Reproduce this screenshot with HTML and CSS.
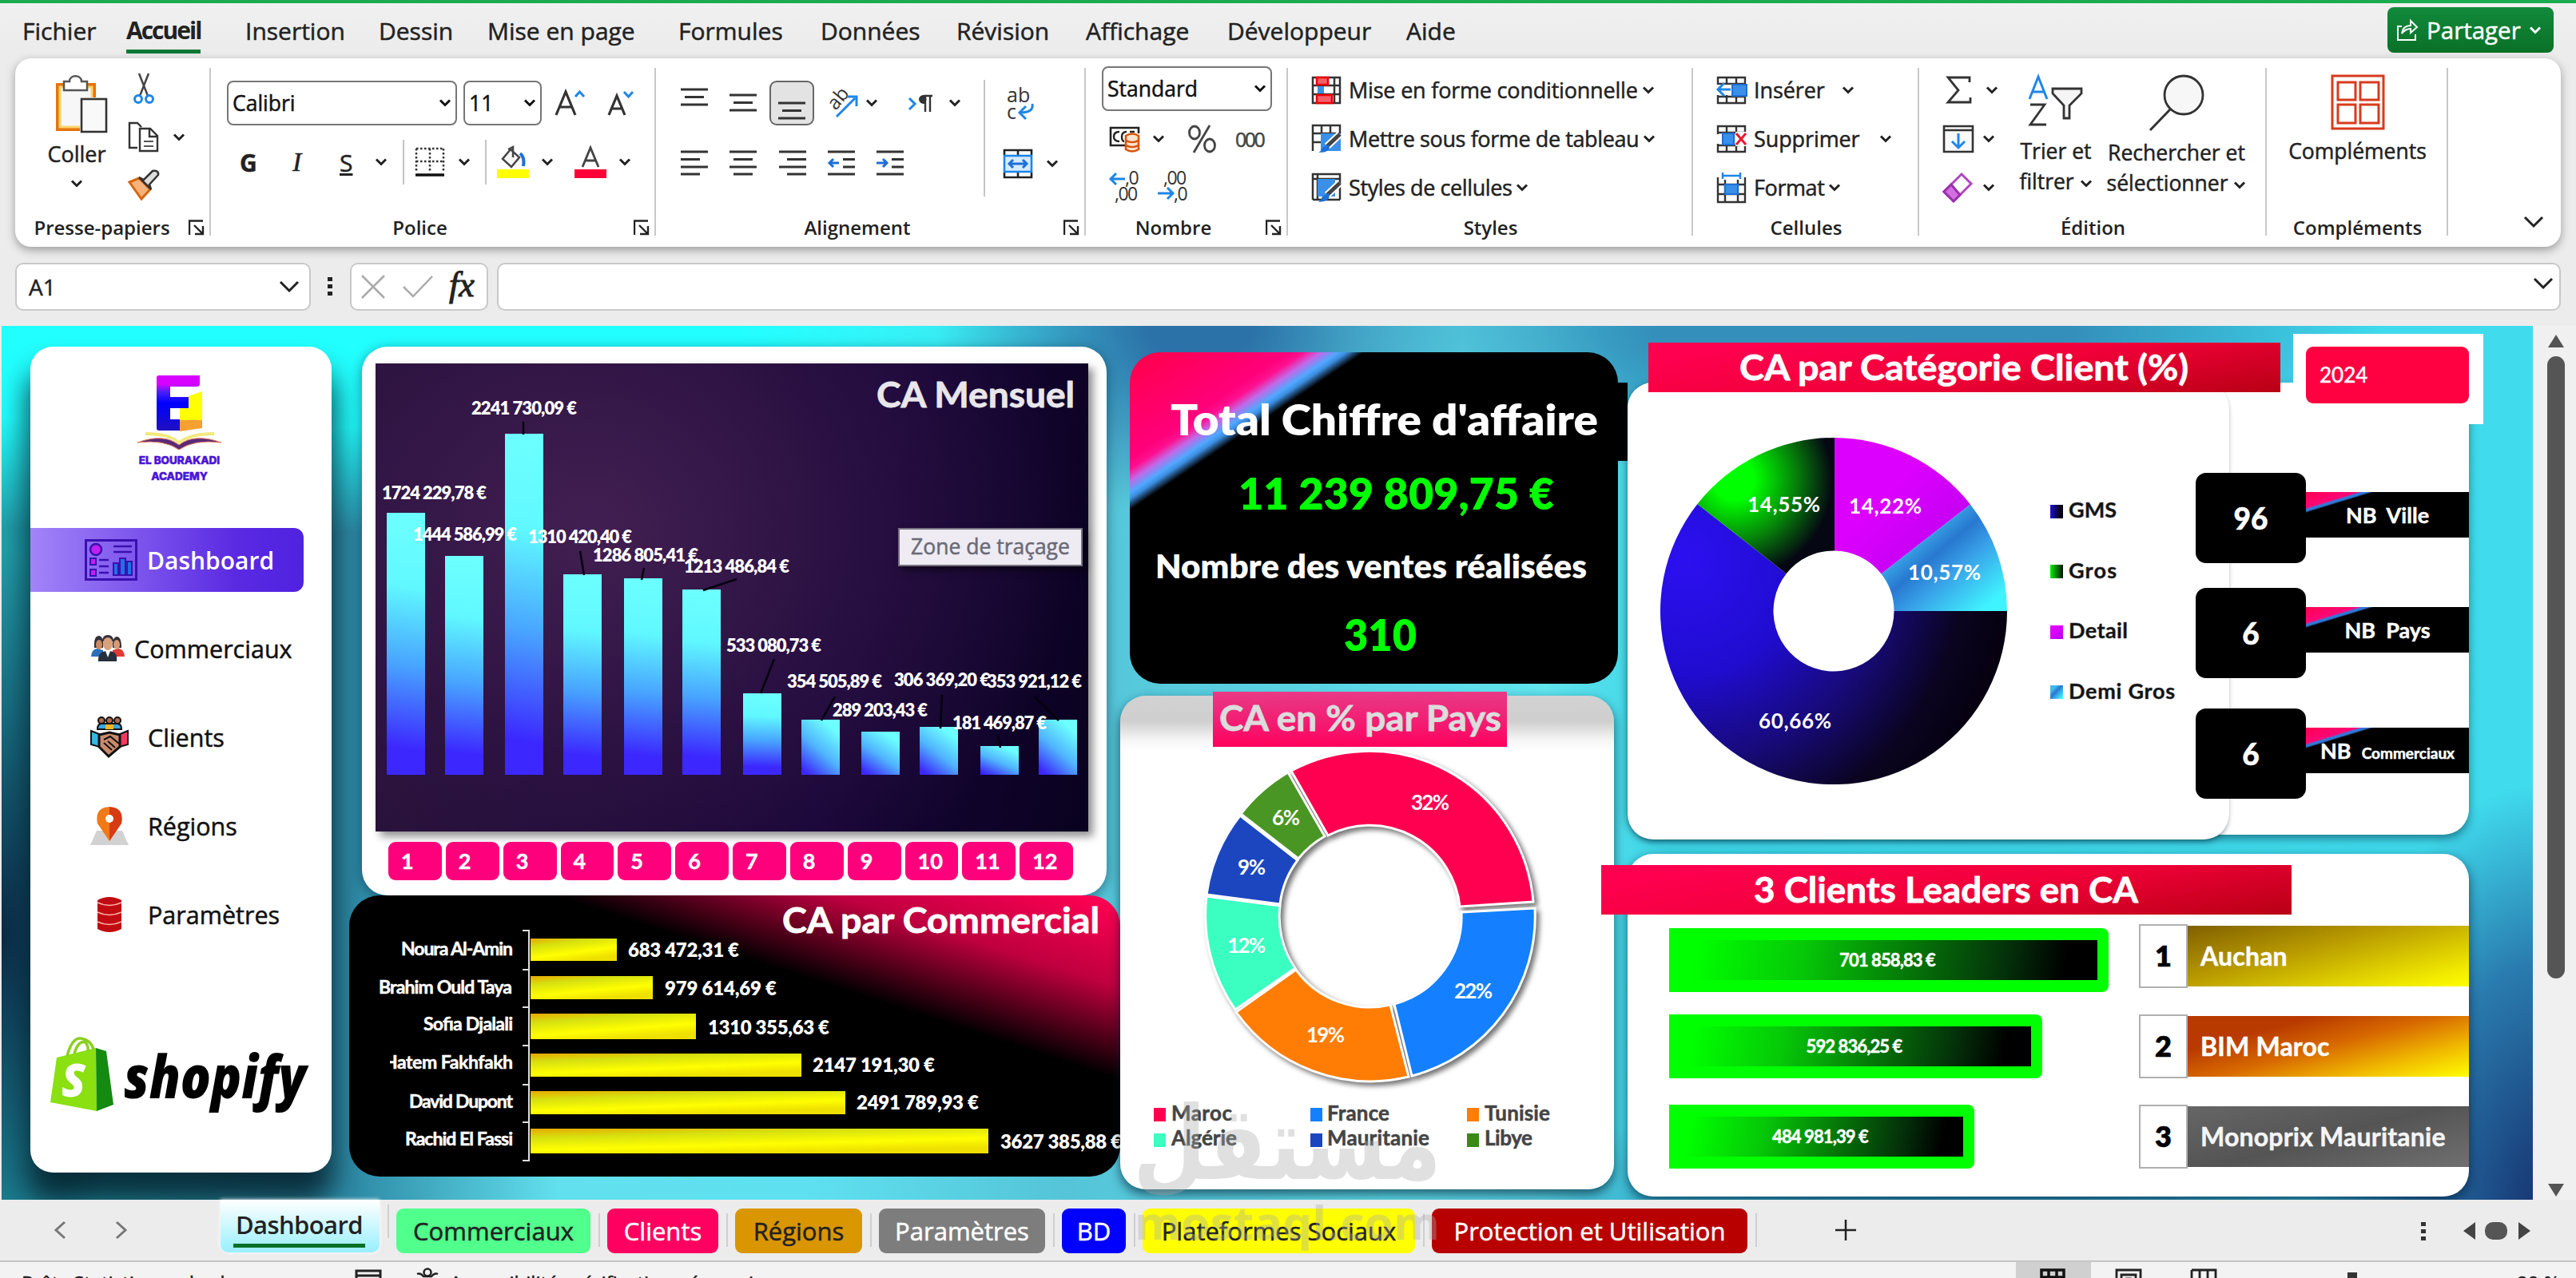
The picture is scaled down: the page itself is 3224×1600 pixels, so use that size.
FILE: index.html
```html
<!DOCTYPE html>
<html lang="fr">
<head>
  <meta charset="UTF-8">
  <title>Dashboard - Excel</title>
  <link rel="stylesheet" href="styles.css">
</head>
<body>

  <!-- Shared icons -->
  <svg class="defs" width="0" height="0">
    <symbol id="chev" viewBox="0 0 16 10"><path d="M2 1.5 L8 7.5 L14 1.5" fill="none" stroke="currentColor" stroke-width="3"/></symbol>
    <symbol id="bigchev" viewBox="0 0 26 16"><path d="M2 2 L13 13 L24 2" fill="none" stroke="currentColor" stroke-width="3"/></symbol>
    <symbol id="launch" viewBox="0 0 20 20"><path d="M1 19 V1.5 H18 M7 7 L17 17 M18 8 V18 H8" fill="none" stroke="#222" stroke-width="2.4"/></symbol>
  </svg>

  <!-- Menu -->
  <div class="menu">
    <span>Fichier</span>
    <span class="active">Accueil</span>
    <span>Insertion</span>
    <span>Dessin</span>
    <span>Mise en page</span>
    <span>Formules</span>
    <span>Données</span>
    <span>Révision</span>
    <span>Affichage</span>
    <span>Développeur</span>
    <span>Aide</span>
    <button class="share">
      <svg width="28" height="30" viewBox="0 0 28 30"><path d="M7 10 H2 V27 H24 V20 M7 19 C8 12 12 9 18 9 V3 L26 11 L18 18 V13 C13 13 10 15 7 19 Z" fill="none" stroke="#fff" stroke-width="2"/></svg>
      Partager
      <svg class="chev"><use href="#chev"/></svg>
    </button>
  </div>

  <!-- Ribbon -->
  <div class="ribbon">

    <div class="group g-clip">
      <div class="tools">
        <div class="paste">
          <svg width="66" height="74" viewBox="0 0 66 74">
            <rect x="3" y="13" width="46" height="56" fill="#f7f7f7" stroke="#e8720c" stroke-width="4"/>
            <rect x="6" y="16" width="40" height="50" fill="none" stroke="#fbd36b" stroke-width="3"/>
            <path d="M11 20 V9 H18 C18 0 33 0 33 9 H40 V20 Z" fill="#fff" stroke="#555" stroke-width="2.5"/>
            <rect x="31" y="29" width="36" height="48" fill="#fff"/>
            <rect x="33" y="31" width="31" height="41" fill="#f9f9f9" stroke="#333" stroke-width="2.6"/>
          </svg>
          <span>Coller</span>
          <svg class="chev"><use href="#chev"/></svg>
        </div>
        <div class="clip-side">
          <svg width="28" height="40" viewBox="0 0 28 40"><path d="M8 1 L19 29 M20 1 L9 29" stroke="#444" stroke-width="2.5"/><circle cx="7" cy="33" r="4.5" fill="none" stroke="#1e86e8" stroke-width="3"/><circle cx="21" cy="33" r="4.5" fill="none" stroke="#1e86e8" stroke-width="3"/></svg>
          <div class="copy">
            <svg width="40" height="40" viewBox="0 0 40 40"><path d="M12 33 H2 V2 H12 L17 7" fill="#fff" stroke="#333" stroke-width="2.4"/><path d="M15 9 H28 L37 18 V37 H15 Z M27 9 V19 H37" fill="#fff" stroke="#333" stroke-width="2.4"/><path d="M20 25 H32 M20 31 H32" stroke="#555" stroke-width="2"/></svg>
            <svg class="chev"><use href="#chev"/></svg>
          </div>
          <svg width="40" height="38" viewBox="0 0 40 38"><path d="M2 15 L14 10 L28 24 L17 36 Z" fill="#f6b27a" stroke="#d9660d" stroke-width="3"/><path d="M14 9 L20 12 L31 1 Q39 0 38 6 L27 18 L29 24 Z" fill="#ddd" stroke="#333" stroke-width="2.5"/></svg>
        </div>
      </div>
      <div class="label"><span>Presse-papiers</span><svg class="launch"><use href="#launch"/></svg></div>
    </div>

    <div class="group g-font">
      <div class="tools rows">
        <div class="font-row1">
          <div class="combo">Calibri<svg class="chev"><use href="#chev"/></svg></div>
          <div class="combo">11<svg class="chev"><use href="#chev"/></svg></div>
          <svg width="38" height="36" viewBox="0 0 38 36"><path d="M2 33 L14 4 L26 33 M6.500 23 H21.500" fill="none" stroke="#333" stroke-width="3.200"/><path d="M26 10 L31.500 4 L37 10" fill="none" stroke="#1e86e8" stroke-width="3"/></svg>
          <svg width="36" height="36" viewBox="0 0 36 36"><path d="M2 33 L12 9 L22 33 M5.500 25 H18.500" fill="none" stroke="#333" stroke-width="3.200"/><path d="M21 4 L26.500 10 L32 4" fill="none" stroke="#1e86e8" stroke-width="3"/></svg>
        </div>
        <div class="font-row2">
          <b>G</b><i>I</i><u>S</u>
          <svg class="chev"><use href="#chev"/></svg>
          <hr>
          <svg width="38" height="38" viewBox="0 0 38 38"><path d="M2 2 H36 M2 2 V32 M36 2 V32 M19 2 V32 M2 18 H36" fill="none" stroke="#333" stroke-width="2.500" stroke-dasharray="2.500 2.500"/><path d="M1 35 H37" stroke="#111" stroke-width="3.500"/></svg>
          <svg class="chev"><use href="#chev"/></svg>
          <hr>
          <svg width="40" height="40" viewBox="0 0 40 40"><path d="M14 4 L20 1 V14 M17 4 L7 16 L18 26 L28 14 Z" fill="#f6f6f6" stroke="#444" stroke-width="2.500"/><path d="M29 9 Q35 14 33 25" fill="none" stroke="#1e6fd8" stroke-width="4"/><rect x="0" y="29" width="40" height="11" fill="#ff0"/></svg>
          <svg class="chev"><use href="#chev"/></svg>
          <svg width="40" height="40" viewBox="0 0 40 40"><path d="M10 26 L20 2 L30 26 M14 18 H26" fill="none" stroke="#444" stroke-width="2.800"/><rect x="0" y="29" width="40" height="11" fill="#ff0038"/></svg>
          <svg class="chev"><use href="#chev"/></svg>
        </div>
      </div>
      <div class="label"><span>Police</span><svg class="launch"><use href="#launch"/></svg></div>
    </div>

    <div class="group g-align">
      <div class="tools">
        <div class="align-left">
          <div class="align-row1">
            <svg width="34" height="40" viewBox="0 0 34 40"><path d="M0 3 H34 M5 12.500 H29 M0 22 H34" stroke="#333" stroke-width="3"/></svg>
            <svg width="34" height="40" viewBox="0 0 34 40"><path d="M0 10 H34 M5 19.500 H29 M0 29 H34" stroke="#333" stroke-width="3"/></svg>
            <div class="pressed"><svg width="34" height="40" viewBox="0 0 34 40"><path d="M0 19 H34 M5 28.500 H29 M0 38 H34" stroke="#333" stroke-width="3"/></svg></div>
            <svg width="42" height="40" viewBox="0 0 42 40"><text x="0" y="0" font-size="24" fill="#333" transform="translate(12 30) rotate(-50)">ab</text><path d="M13 37 L36 14 M26 12 H38 V24" fill="none" stroke="#1e86e8" stroke-width="3"/></svg>
            <svg class="chev"><use href="#chev"/></svg>
            <svg width="32" height="30" viewBox="0 0 32 30"><path d="M1 9 L8 16 L1 23" fill="none" stroke="#1e86e8" stroke-width="3"/><path d="M22 15 C12 15 12 6 20 6 H30 M21 6 V26 M27 6 V26" fill="none" stroke="#333" stroke-width="2.400"/><circle cx="18" cy="10.500" r="4.500" fill="#333"/></svg>
            <svg class="chev"><use href="#chev"/></svg>
          </div>
          <div class="align-row2">
            <svg width="34" height="34" viewBox="0 0 34 34"><path d="M0 3 H34 M0 12.500 H24 M0 22 H34 M0 31 H24" stroke="#333" stroke-width="3"/></svg>
            <svg width="34" height="34" viewBox="0 0 34 34"><path d="M0 3 H34 M5 12.500 H29 M0 22 H34 M5 31 H29" stroke="#333" stroke-width="3"/></svg>
            <svg width="34" height="34" viewBox="0 0 34 34"><path d="M0 3 H34 M10 12.500 H34 M0 22 H34 M10 31 H34" stroke="#333" stroke-width="3"/></svg>
            <svg width="34" height="34" viewBox="0 0 34 34"><path d="M0 3 H34 M19 12.500 H34 M19 22 H34 M0 31 H34" stroke="#333" stroke-width="3"/><path d="M14 17 H2 M7 12 L2 17 L7 22" fill="none" stroke="#1e6fd8" stroke-width="3"/></svg>
            <svg width="34" height="34" viewBox="0 0 34 34"><path d="M0 3 H34 M19 12.500 H34 M19 22 H34 M0 31 H34" stroke="#333" stroke-width="3"/><path d="M0 17 H12 M8 12 L13 17 L8 22" fill="none" stroke="#1e6fd8" stroke-width="3"/></svg>
          </div>
        </div>
        <hr>
        <div class="wrap-merge">
          <svg width="36" height="44" viewBox="0 0 36 44"><text x="0" y="20" font-size="25" fill="#333">ab</text><text x="0" y="41" font-size="25" fill="#333">c</text><path d="M32 22 Q34 33 17 33 M24 25 L16 33 L24 41" fill="none" stroke="#1e86e8" stroke-width="3"/></svg>
          <div class="merge">
            <svg width="38" height="38" viewBox="0 0 38 38"><path d="M2 8 V2 H36 V8 M19 2 V8 M2 30 V36 H36 V30 M19 30 V36" fill="none" stroke="#222" stroke-width="2.600"/><rect x="2" y="9" width="34" height="20" fill="#d6ebff" stroke="#1e86e8" stroke-width="2.600"/><path d="M8 19 H30 M13 14 L8 19 L13 24 M25 14 L30 19 L25 24" fill="none" stroke="#1e6fd8" stroke-width="3"/></svg>
            <svg class="chev"><use href="#chev"/></svg>
          </div>
        </div>
      </div>
      <div class="label"><span>Alignement</span><svg class="launch"><use href="#launch"/></svg></div>
    </div>

    <div class="group g-num">
      <div class="tools rows">
        <div class="combo">Standard<svg class="chev"><use href="#chev"/></svg></div>
        <div class="num-row2">
          <svg width="40" height="34" viewBox="0 0 40 34"><path d="M20 25 H2 V3 H37 V10" fill="none" stroke="#222" stroke-width="2.600"/><path d="M13 8 Q6 8 6 14 T13 20 M22 8 Q16 8 16 14 T19 20 M26 8 H32" fill="none" stroke="#222" stroke-width="2.400"/><path d="M21 13 Q29 8 37 13 V30 Q29 35 21 30 Z M21 19 Q29 23 37 19 M21 25 Q29 29 37 25" fill="#fde4cf" stroke="#d9540d" stroke-width="2.600"/></svg>
          <svg class="chev"><use href="#chev"/></svg>
          <svg width="38" height="38" viewBox="0 0 38 38"><ellipse cx="9" cy="11" rx="6.500" ry="8" fill="none" stroke="#444" stroke-width="2.800"/><ellipse cx="28" cy="27" rx="6.500" ry="8" fill="none" stroke="#444" stroke-width="2.800"/><path d="M28 2 L8 36" stroke="#444" stroke-width="2.800"/></svg>
          <span class="zeros">000</span>
        </div>
        <div class="num-row3">
          <svg width="38" height="40" viewBox="0 0 38 40"><text x="20" y="17" class="dec">,0</text><text x="7" y="37" class="dec">,00</text><path d="M20 10 H2 M9 3 L2 10 L9 17" fill="none" stroke="#1e86e8" stroke-width="3"/></svg>
          <svg width="38" height="40" viewBox="0 0 38 40"><text x="7" y="17" class="dec">,00</text><text x="20" y="37" class="dec">,0</text><path d="M0 28 H18 M12 21 L19 28 L12 35" fill="none" stroke="#1e86e8" stroke-width="3"/></svg>
        </div>
      </div>
      <div class="label"><span>Nombre</span><svg class="launch"><use href="#launch"/></svg></div>
    </div>

    <div class="group g-styles">
      <div class="tools list">
        <div class="item">
          <svg width="38" height="36" viewBox="0 0 38 36"><path d="M2 2 H36 V34 H2 Z M2 12 H36 M2 23 H36 M29 2 V34" fill="#fff" stroke="#333" stroke-width="2.500"/><rect x="7" y="2" width="14" height="9" fill="#f4606a" stroke="#e00" stroke-width="2.500"/><rect x="8" y="13" width="8" height="9" fill="#3a90e8"/><rect x="7" y="24" width="19" height="10" fill="#f4606a" stroke="#e00" stroke-width="2.500"/></svg>
          Mise en forme conditionnelle<svg class="chev"><use href="#chev"/></svg>
        </div>
        <div class="item">
          <svg width="38" height="38" viewBox="0 0 38 38"><path d="M2 34 V2 H36 V12 M2 12 H36 M2 23 H12 M13 2 V12 M24 2 V12" fill="none" stroke="#333" stroke-width="2.500"/><rect x="12" y="12" width="25" height="22" fill="#3a90e8"/><path d="M36 13 L20 28" stroke="#fff" stroke-width="9"/><path d="M36 13 L20 28" stroke="#444" stroke-width="5"/><path d="M22 26 Q26 36 9 36 Q13 34 14 30 Z" fill="#1e6fd8"/></svg>
          <span class="w-tab">Mettre sous forme de tableau</span><svg class="chev"><use href="#chev"/></svg>
        </div>
        <div class="item">
          <svg width="38" height="38" viewBox="0 0 38 38"><path d="M2 34 V2 H36 V34 M2 8 H36 M8 2 V34 M2 34 H36" fill="none" stroke="#333" stroke-width="2.500"/><rect x="8" y="8" width="22" height="22" fill="#3a90e8"/><path d="M36 13 L20 28" stroke="#fff" stroke-width="9"/><path d="M36 13 L20 28" stroke="#444" stroke-width="5"/><path d="M22 26 Q26 36 9 37 Q13 34 14 30 Z" fill="#1e6fd8"/></svg>
          <span class="w-tab">Styles de cellules</span><svg class="chev"><use href="#chev"/></svg>
        </div>
      </div>
      <div class="label"><span>Styles</span></div>
    </div>

    <div class="group g-cells">
      <div class="tools list">
        <div class="item">
          <svg width="38" height="36" viewBox="0 0 38 36"><path d="M2 2 H36 V34 H2 Z M2 10 H36 M2 26 H36 M13 2 V34 M25 2 V34" fill="#fff" stroke="#333" stroke-width="2.400"/><rect x="0" y="11" width="22" height="13" fill="#fff"/><rect x="20" y="11" width="18" height="14" fill="#3a90e8" stroke="#1e6fd8" stroke-width="2"/><path d="M18 17 H2 M10 9 L2 17 L10 25" fill="none" stroke="#1e86e8" stroke-width="3"/></svg>
          <span class="w-ins">Insérer</span><svg class="chev"><use href="#chev"/></svg>
        </div>
        <div class="item">
          <svg width="38" height="36" viewBox="0 0 38 36"><path d="M2 12 V2 H36 V12 M2 24 V34 H36 V24 M2 10 H36 M2 26 H30 M13 2 V34 M25 2 V34" fill="none" stroke="#333" stroke-width="2.400"/><rect x="8" y="11" width="14" height="14" fill="#3a90e8" stroke="#1e6fd8" stroke-width="2"/><rect x="24" y="9" width="14" height="18" fill="#fff"/><path d="M25 11 L37 25 M37 11 L25 25" stroke="#e81c2e" stroke-width="3"/></svg>
          <span class="w-sup">Supprimer</span><svg class="chev"><use href="#chev"/></svg>
        </div>
        <div class="item">
          <svg width="38" height="40" viewBox="0 0 38 40"><path d="M2 7 V38 H36 V7 M2 16 H36 M2 28 H36 M11 10 V38 M27 10 V38" fill="none" stroke="#333" stroke-width="2.400"/><rect x="11" y="16" width="16" height="12" fill="#3a90e8" stroke="#1e6fd8" stroke-width="2"/><path d="M9 5 H29 M8 1 V9 M30 1 V9" stroke="#1e86e8" stroke-width="2.500"/></svg>
          <span class="w-tab">Format</span><svg class="chev"><use href="#chev"/></svg>
        </div>
      </div>
      <div class="label"><span>Cellules</span></div>
    </div>

    <div class="group g-edit">
      <div class="tools">
        <div class="list edit-small">
          <div class="item"><svg width="40" height="36" viewBox="0 0 40 36"><path d="M34 8 V2 H7 L20 18 L7 33 H35 V27" fill="none" stroke="#333" stroke-width="2.800"/></svg><svg class="chev wide"><use href="#chev"/></svg></div>
          <div class="item"><svg width="40" height="36" viewBox="0 0 40 36"><path d="M2 2 H38 V34 H2 Z M2 7 H38" fill="#f9f9f9" stroke="#333" stroke-width="2.600"/><path d="M20 11 V29 M12 21 L20 29 L28 21" fill="none" stroke="#1e86e8" stroke-width="3"/></svg><svg class="chev"><use href="#chev"/></svg></div>
          <div class="item"><svg width="40" height="40" viewBox="0 0 40 40"><path d="M24 3 L36 15 L14 37 L2 25 Z" fill="#fff" stroke="#b146c2" stroke-width="3"/><path d="M11 16 L22 29 L14 37 L2 25 Z" fill="#d36fe0" stroke="#9b30ad" stroke-width="3"/></svg><svg class="chev"><use href="#chev"/></svg></div>
        </div>
        <div class="big">
          <svg width="72" height="70" viewBox="0 0 72 70"><path d="M3 31 L14 3 L25 31 M7 22 H21" fill="none" stroke="#1e86e8" stroke-width="3"/><path d="M4 38 H22 L4 63 H24" fill="none" stroke="#333" stroke-width="2.800"/><path d="M32 18 H68 V24 L53 39 V55 H46 V39 L32 24 Z" fill="#f5f5f5" stroke="#333" stroke-width="2.800"/></svg>
          <span>Trier et<br>filtrer <svg class="chev"><use href="#chev"/></svg></span>
        </div>
        <div class="big big2">
          <svg width="72" height="72" viewBox="0 0 72 72"><circle cx="45" cy="26" r="24" fill="#f7f7f7" stroke="#333" stroke-width="2.800"/><path d="M28 44 L3 70" stroke="#333" stroke-width="3"/></svg>
          <span>Rechercher et<br>sélectionner <svg class="chev"><use href="#chev"/></svg></span>
        </div>
      </div>
      <div class="label"><span>Édition</span></div>
    </div>

    <div class="group g-addins">
      <div class="tools">
        <div class="big">
          <svg width="68" height="70" viewBox="0 0 68 70"><path d="M2 2 H66 V68 H2 Z M9 10 H31 V32 H9 Z M37 10 H60 V32 H37 Z M9 38 H31 V61 H9 Z M37 38 H60 V61 H37 Z" fill="none" stroke="#d83b1c" stroke-width="3"/></svg>
          <span>Compléments</span>
        </div>
      </div>
      <div class="label"><span>Compléments</span></div>
    </div>

    <svg class="bigchev collapse"><use href="#bigchev"/></svg>
  </div>

  <!-- Formula bar -->
  <div class="formula">
    <div class="box namebox">A1<svg class="bigchev"><use href="#bigchev"/></svg></div>
    <svg width="6" height="24" viewBox="0 0 6 24"><path d="M0 0 H6 V5 H0 Z M0 9 H6 V14 H0 Z M0 18 H6 V23 H0 Z" fill="#222"/></svg>
    <div class="box fx">
      <svg width="30" height="30" viewBox="0 0 30 30"><path d="M1 1 L29 29 M29 1 L1 29" stroke="#aaa" stroke-width="2.500"/></svg>
      <svg width="38" height="28" viewBox="0 0 38 28"><path d="M1 14 L13 26 L37 1" fill="none" stroke="#aaa" stroke-width="2.500"/></svg>
      <em>fx</em>
    </div>
    <div class="box input"><svg class="bigchev"><use href="#bigchev"/></svg></div>
  </div>

  <!-- Worksheet -->
  <div class="work">
    <div class="sheet">

      <div class="sidebar">
        <div class="logo">
          <svg width="110" height="96" viewBox="170 468 110 96">
            <defs><linearGradient id="lg" x1="0" y1="0" x2="0" y2="1"><stop offset="0" stop-color="#d800ff"/><stop offset=".16" stop-color="#d800ff"/><stop offset=".3" stop-color="#4a20ff"/><stop offset=".5" stop-color="#0000ff"/><stop offset="1" stop-color="#2010c0"/></linearGradient></defs>
            <path d="M199 470 H250 V481 Q250 484 246 484 H213 V497 H236 V511 H213 V525 H226 V539 H199 Q196 539 196 536 V473 Q196 470 199 470 Z" fill="url(#lg)"/>
            <path d="M253 490 V526 H225 V511 H236 V496 Z" fill="#ffff00"/>
            <path d="M253 526 V536 L225 540 V526 Z" fill="#f5a030"/>
            <path d="M182 541 Q212 541 224 552 Q238 541 268 541 V545 Q238 545 224 556 Q212 545 182 545 Z" fill="#f3e87a"/>
            <path d="M172 554 Q205 542 224 557 Q243 542 277 554 Q242 550 224 563 Q206 550 172 554 Z" fill="#5a2a78" stroke="#e0785a" stroke-width="1"/>
          </svg>
          <strong>EL BOURAKADI<br>ACADEMY</strong>
        </div>
        <div class="nav active">
          <svg width="66" height="52" viewBox="0 0 66 52"><rect x="1.500" y="1.500" width="63" height="49" fill="none" stroke="#3a10b0" stroke-width="3"/><circle cx="14" cy="13" r="7" fill="#c020f0" stroke="#3a10b0" stroke-width="2.500"/><path d="M36 9 H59 M36 16 H59 M18 26 H30 M18 34 H30 M18 42 H30" stroke="#3a10b0" stroke-width="2.500"/><rect x="7" y="24" width="7" height="8" fill="#c020f0" stroke="#3a10b0" stroke-width="2"/><rect x="7" y="38" width="7" height="8" fill="#c020f0" stroke="#3a10b0" stroke-width="2"/><path d="M36 30 H42 V45 H36 Z M44 24 H51 V45 H44 Z M53 28 H59 V45 H53 Z" fill="#2070e8" stroke="#3a10b0" stroke-width="2"/></svg>
          <span>Dashboard</span>
        </div>
        <div class="nav sales">
          <svg width="44" height="34" viewBox="0 0 44 34"><path d="M1 27 Q2 17 9 17 L16 19 V27 Z" fill="#2a6fb8"/><path d="M43 27 Q42 17 35 17 L28 19 V27 Z" fill="#e03a34"/><path d="M5 16 Q4 1 11 1 Q17 2 16 16 Z M28 16 Q27 3 33 2 Q39 2 39 16 Z" fill="#33303a"/><ellipse cx="11" cy="12" rx="4" ry="6" fill="#c98a63"/><ellipse cx="33" cy="12" rx="4" ry="6" fill="#d59a76"/><path d="M10 33 Q9 20 22 20 Q35 20 33 33 Z" fill="#26303c"/><path d="M19 20 H25 L22 28 Z" fill="#fff"/><path d="M15 8 Q15 0 22 0 Q29 0 29 8 Z" fill="#33303a"/><ellipse cx="22" cy="11" rx="6" ry="8" fill="#d9a07c"/></svg>
          <span>Commerciaux</span>
        </div>
        <div class="nav">
          <svg width="48" height="52" viewBox="0 0 48 52"><path d="M9 16 Q9 9 14 9 H34 Q39 9 39 16 Z" fill="#35a8e0" stroke="#111" stroke-width="2"/><path d="M19 16 V10 H29 V16 Z" fill="#f5b820"/><circle cx="14" cy="5" r="4" fill="#b06a48" stroke="#111" stroke-width="2"/><circle cx="24" cy="5" r="4" fill="#b06a48" stroke="#111" stroke-width="2"/><circle cx="34" cy="5" r="4" fill="#b06a48" stroke="#111" stroke-width="2"/><path d="M1 18 L11 22 V38 L1 35 Z" fill="#35b8e0" stroke="#111" stroke-width="2"/><path d="M47 18 L37 22 V38 L47 35 Z" fill="#f03a60" stroke="#111" stroke-width="2"/><path d="M11 23 L24 20 L37 23 V38 L23 50 L11 38 Z" fill="#c98a6c" stroke="#111" stroke-width="3"/><path d="M17 29 L25 25 L36 34 M17 33 L27 42 M22 31 L31 39" fill="none" stroke="#111" stroke-width="2"/></svg>
          <span>Clients</span>
        </div>
        <div class="nav">
          <svg width="48" height="50" viewBox="0 0 48 50"><path d="M8 31 H40 L48 49 H0 Z" fill="#d2d2d2"/><path d="M24 44 L9 22 Q5 2 24 1 Z" fill="#f07a18"/><path d="M24 44 L39 22 Q43 2 24 1 Z" fill="#d83a14"/><circle cx="24" cy="16" r="5" fill="#fff"/></svg>
          <span>Régions</span>
        </div>
        <div class="nav">
          <svg width="48" height="46" viewBox="0 0 48 46"><path d="M9 5 Q24 -3 39 5 V41 Q24 49 9 41 Z" fill="#c00b12"/><path d="M9 8 Q24 15 39 8 M9 20 Q24 27 39 20 M9 32 Q24 39 39 32" fill="none" stroke="#ffb0a8" stroke-width="1.600"/></svg>
          <span>Paramètres</span>
        </div>
        <svg class="shopify" width="330" height="110" viewBox="58 1292 330 110">
          <path d="M71 1325 L120 1313 L121 1392 L63 1381 Z" fill="#8ae010"/>
          <path d="M120 1313 L133 1317 L142 1384 L121 1392 Z" fill="#148a10"/>
          <path d="M84 1323 Q90 1300 101 1301 Q114 1303 117 1315 M93 1320 Q98 1303 107 1306 Q111 1311 110 1317" fill="none" stroke="#8ad020" stroke-width="3.500"/>
          <text x="77" y="1374" font-size="57" font-weight="800" font-style="italic" fill="#fff" textLength="30" lengthAdjust="spacingAndGlyphs">S</text>
          <text x="155" y="1376" font-size="74" font-weight="800" font-style="italic" fill="#000" textLength="228" lengthAdjust="spacingAndGlyphs">shopify</text>
        </svg>
      </div>

      <div class="col-sales">
        <div class="card monthly">
          <svg class="plot" width="892" height="586" viewBox="470 455 892 586">
            <defs>
              <linearGradient id="bar" x1=".5" y1="0" x2=".48" y2="1"><stop offset="0" stop-color="#6dffff"/><stop offset=".28" stop-color="#60f8ff"/><stop offset=".58" stop-color="#48a4ff"/><stop offset=".9" stop-color="#3c28ff"/></linearGradient>
              <linearGradient id="barS" x1=".8" y1="0" x2=".2" y2="1"><stop offset=".1" stop-color="#6dffff"/><stop offset=".55" stop-color="#50b4ff"/><stop offset="1" stop-color="#3c28ff"/></linearGradient>
            </defs>
            <g fill="url(#bar)">
              <rect x="484" y="642" width="48" height="328"/><rect x="557" y="696" width="48" height="274"/>
              <rect x="632" y="543" width="48" height="427"/><rect x="705" y="719" width="48" height="251"/>
              <rect x="781" y="724" width="48" height="246"/><rect x="854" y="738" width="48" height="232"/>
              <rect x="930" y="868" width="48" height="102"/>
            </g>
            <g fill="url(#barS)">
              <rect x="1003" y="901" width="48" height="69"/><rect x="1078" y="916" width="48" height="54"/>
              <rect x="1151" y="910" width="48" height="60"/><rect x="1227" y="934" width="48" height="36"/>
              <rect x="1300" y="901" width="48" height="69"/>
            </g>
            <path d="M655 528 V544 M726 690 L731 720 M806 711 L803 726 M922 725 L880 739 M969 825 L952 868 M1045 872 L1028 902 M1179 870 L1177 912 M1249 920 L1252 936 M1294 872 L1325 902" stroke="#050010" stroke-width="2.500"/>
            <g class="val">
              <text x="478" y="625" textLength="131">1724 229,78 €</text>
              <text x="517" y="677" textLength="130">1444 586,99 €</text>
              <text x="590" y="519" textLength="132">2241 730,09 €</text>
              <text x="661" y="680" textLength="130">1310 420,40 €</text>
              <text x="742" y="703" textLength="132">1286 805,41 €</text>
              <text x="856" y="717" textLength="132">1213 486,84 €</text>
              <text x="909" y="816" textLength="119">533 080,73 €</text>
              <text x="985" y="861" textLength="119">354 505,89 €</text>
              <text x="1042" y="897" textLength="119">289 203,43 €</text>
              <text x="1119" y="859" textLength="120">306 369,20 €</text>
              <text x="1192" y="913" textLength="118">181 469,87 €</text>
              <text x="1235" y="861" textLength="119">353 921,12 €</text>
            </g>
            <text x="1097" y="510" class="title soft" textLength="248" lengthAdjust="spacingAndGlyphs">CA Mensuel</text>
          </svg>
          <div class="tip">Zone de traçage</div>
          <div class="slicer">
            <span>1</span><span>2</span><span>3</span><span>4</span><span>5</span><span>6</span>
            <span>7</span><span>8</span><span>9</span><span>10</span><span>11</span><span>12</span>
          </div>
        </div>

        <div class="card commercial">
          <svg width="965" height="352" viewBox="437 1121 965 352">
            <defs>
              <linearGradient id="gold" x1="0" y1="0" x2=".5" y2="1"><stop offset="0" stop-color="#e8a800"/><stop offset=".3" stop-color="#d6e010"/><stop offset=".7" stop-color="#ffff00"/><stop offset="1" stop-color="#eee000"/></linearGradient>
              <clipPath id="cut"><rect x="488" y="1310" width="200" height="50"/></clipPath>
            </defs>
            <g fill="url(#gold)">
              <rect x="664" y="1175" width="108" height="28"/><rect x="664" y="1222" width="153" height="29"/>
              <rect x="664" y="1269" width="207" height="32"/><rect x="664" y="1319" width="339" height="29"/>
              <rect x="664" y="1366" width="394" height="29"/><rect x="664" y="1413" width="573" height="31"/>
            </g>
            <path d="M654 1165 H662 V1453 H654 M654 1214 H662 M654 1261 H662 M654 1309 H662 M654 1358 H662 M654 1405 H662" fill="none" stroke="#ddd" stroke-width="2"/>
            <g class="name">
              <text x="502" y="1196" textLength="140">Noura Al-Amin</text>
              <text x="474" y="1244" textLength="167">Brahim Ould Taya</text>
              <text x="530" y="1290" textLength="112">Sofia Djalali</text>
              <text x="480" y="1338" textLength="162" clip-path="url(#cut)">Hatem Fakhfakh</text>
              <text x="512" y="1387" textLength="130">David Dupont</text>
              <text x="507" y="1434" textLength="135">Rachid El Fassi</text>
            </g>
            <g class="val big-val">
              <text x="786" y="1198" textLength="139">683 472,31 €</text>
              <text x="832" y="1246" textLength="140">979 614,69 €</text>
              <text x="886" y="1295" textLength="152">1310 355,63 €</text>
              <text x="1017" y="1342" textLength="153">2147 191,30 €</text>
              <text x="1072" y="1389" textLength="153">2491 789,93 €</text>
              <text x="1252" y="1438" textLength="152">3627 385,88 €</text>
            </g>
            <text x="979" y="1168" class="title" textLength="397" lengthAdjust="spacingAndGlyphs">CA par Commercial</text>
          </svg>
        </div>
      </div>

      <div class="col-total">
        <div class="total">
          <svg width="611" height="415" viewBox="1414 441 611 415">
            <text x="1465" y="545" font-size="52" fill="#fff" textLength="535" lengthAdjust="spacingAndGlyphs">Total Chiffre d'affaire</text>
            <text x="1550" y="638" font-size="54" fill="#0f0" textLength="395" lengthAdjust="spacingAndGlyphs">11 239 809,75 €</text>
            <text x="1446" y="724" font-size="41" fill="#fff" textLength="540" lengthAdjust="spacingAndGlyphs">Nombre des ventes réalisées</text>
            <text x="1682" y="815" font-size="54" fill="#0f0" textLength="91" lengthAdjust="spacingAndGlyphs">310</text>
          </svg>
        </div>

        <div class="card country">
          <svg width="618" height="618" viewBox="1402 871 618 618">
            <g stroke="#fff" stroke-width="3" class="ring">
              <path fill="#ff0050" d="M1616 965 A206 206 0 0 1 1919 1129 L1827 1135 A113.500 113.500 0 0 0 1662 1046 Z"/>
              <path fill="#1480ff" d="M1921 1137 A206 206 0 0 1 1767 1347 L1745 1257 A113.500 113.500 0 0 0 1829 1142 Z"/>
              <path fill="#ff7d05" d="M1763 1348 A206 206 0 0 1 1547 1267 L1622 1214 A113.500 113.500 0 0 0 1740 1258 Z"/>
              <path fill="#3affc0" d="M1546 1264 A206 206 0 0 1 1510 1122 L1602 1134 A113.500 113.500 0 0 0 1621 1212 Z"/>
              <path fill="#1c46c0" d="M1510 1120 A206 206 0 0 1 1552 1021 L1624 1077 A113.500 113.500 0 0 0 1602 1132 Z"/>
              <path fill="#4a9624" d="M1553 1019 A206 206 0 0 1 1612 967 L1658 1047 A113.500 113.500 0 0 0 1625 1075 Z"/>
            </g>
            <g class="pct">
              <text x="1766" y="1014" textLength="48">32%</text>
              <text x="1820" y="1250" textLength="48">22%</text>
              <text x="1635" y="1305" textLength="48">19%</text>
              <text x="1536" y="1193" textLength="48">12%</text>
              <text x="1549" y="1095" textLength="35">9%</text>
              <text x="1592" y="1033" textLength="35">6%</text>
            </g>
            <g class="key">
              <rect x="1444" y="1387" width="15" height="17" fill="#ff0050"/><text x="1466" y="1403" textLength="76">Maroc</text>
              <rect x="1640" y="1387" width="15" height="17" fill="#1480ff"/><text x="1661" y="1403" textLength="78">France</text>
              <rect x="1836" y="1387" width="15" height="17" fill="#ff7d05"/><text x="1858" y="1403" textLength="82">Tunisie</text>
              <rect x="1444" y="1419" width="15" height="17" fill="#3affc0"/><text x="1466" y="1434" textLength="82">Algérie</text>
              <rect x="1640" y="1419" width="15" height="17" fill="#1c46c0"/><text x="1661" y="1434" textLength="128">Mauritanie</text>
              <rect x="1836" y="1419" width="15" height="17" fill="#3a8a14"/><text x="1858" y="1434" textLength="60">Libye</text>
            </g>
          </svg>
          <div class="banner country-title">
            <svg width="368" height="69" viewBox="1518 866 368 69"><text x="1526" y="915" class="title grey" textLength="353" lengthAdjust="spacingAndGlyphs">CA en % par Pays</text></svg>
          </div>
        </div>
      </div>

      <div class="col-clients">
        <div class="category">
          <div class="card category-main">
            <svg width="753" height="572" viewBox="2037 479 753 572">
              <defs>
                <radialGradient id="gms" gradientUnits="userSpaceOnUse" cx="2110" cy="700" r="410"><stop offset="0" stop-color="#2c10f0"/><stop offset=".35" stop-color="#200cd0"/><stop offset=".62" stop-color="#170a78"/><stop offset=".85" stop-color="#0a0420"/><stop offset="1" stop-color="#060010"/></radialGradient>
                <radialGradient id="gros" gradientUnits="userSpaceOnUse" cx="2170" cy="600" r="130"><stop offset=".2" stop-color="#00ff00"/><stop offset=".6" stop-color="#06800a"/><stop offset=".95" stop-color="#050812"/></radialGradient>
                <linearGradient id="det" x1="0" y1="0" x2="1" y2="1"><stop offset=".4" stop-color="#dc00ff"/><stop offset="1" stop-color="#b400e8"/></linearGradient>
                <linearGradient id="demi" x1="0" y1="0" x2="1" y2="1"><stop offset=".25" stop-color="#40b8f0"/><stop offset=".45" stop-color="#2878d0"/><stop offset=".6" stop-color="#38a0e8"/><stop offset=".9" stop-color="#40f4ff"/></linearGradient>
                <linearGradient id="gmsKey"><stop offset="0" stop-color="#2010d0"/><stop offset=".8" stop-color="#060010"/></linearGradient>
                <linearGradient id="grosKey"><stop offset="0" stop-color="#00f000"/><stop offset="1" stop-color="#031003"/></linearGradient>
              </defs>
              <path fill="url(#gms)" d="M2512 765 A217 217 0 1 1 2124.400 631 L2235.700 718.300 A75.500 75.500 0 1 0 2370.500 765 Z"/>
              <path fill="url(#gros)" d="M2124.400 631 A217 217 0 0 1 2296 548 V689.500 A75.500 75.500 0 0 0 2235.700 718.300 Z"/>
              <path fill="url(#det)" d="M2296 548 A217 217 0 0 1 2466 631.400 L2354.500 718.500 A75.500 75.500 0 0 0 2296 689.500 Z"/>
              <path fill="url(#demi)" d="M2466 631.400 A217 217 0 0 1 2512 765 H2370.500 A75.500 75.500 0 0 0 2354.500 718.500 Z"/>
              <g class="pct">
                <text x="2201" y="912" textLength="91">60,66%</text>
                <text x="2187" y="641" textLength="91">14,55%</text>
                <text x="2314" y="643" textLength="91">14,22%</text>
                <text x="2388" y="726" textLength="91">10,57%</text>
              </g>
              <g class="key dark">
                <rect x="2566" y="632" width="16" height="17" fill="url(#gmsKey)"/><text x="2589" y="648" textLength="60">GMS</text>
                <rect x="2566" y="707" width="16" height="17" fill="url(#grosKey)"/><text x="2589" y="724" textLength="60">Gros</text>
                <rect x="2566" y="783" width="16" height="17" fill="url(#det)"/><text x="2589" y="799" textLength="74">Detail</text>
                <rect x="2566" y="858" width="16" height="17" fill="url(#demi)"/><text x="2589" y="875" textLength="133">Demi Gros</text>
              </g>
            </svg>
          </div>
          <div class="counts">
            <div class="count"><b>96</b><span><em>NB&nbsp; Ville</em></span></div>
            <div class="count"><b>6</b><span><em>NB&nbsp; Pays</em></span></div>
            <div class="count last"><b>6</b><span><em>NB&nbsp; <small>Commerciaux</small></em></span></div>
          </div>
          <div class="banner category-title">
            <svg width="791" height="62" viewBox="2063 429 791 62"><text x="2177" y="476" class="title" textLength="562" lengthAdjust="spacingAndGlyphs">CA par Catégorie Client (%)</text></svg>
          </div>
          <div class="year"><span>2024</span></div>
        </div>

        <div class="card leaders">
          <div class="banner leaders-title">
            <svg width="864" height="62" viewBox="2004 1083 864 62"><text x="2195" y="1130" class="title" textLength="481" lengthAdjust="spacingAndGlyphs">3 Clients Leaders en CA</text></svg>
          </div>
          <div class="leader"><div class="track"><div class="amount" style="width:526px">701 858,83 €</div></div><div class="rank">1</div><div class="who gold">Auchan</div></div>
          <div class="leader"><div class="track"><div class="amount" style="width:443px">592 836,25 €</div></div><div class="rank">2</div><div class="who orange">BIM Maroc</div></div>
          <div class="leader"><div class="track"><div class="amount" style="width:358px">484 981,39 €</div></div><div class="rank">3</div><div class="who grey">Monoprix Mauritanie</div></div>
        </div>
      </div>
    </div>

    <div class="vscroll">
      <svg width="22" height="18" viewBox="0 0 22 18"><path d="M11 1 L21 17 H1 Z" fill="#555"/></svg>
      <div class="thumb"></div>
      <svg width="22" height="18" viewBox="0 0 22 18"><path d="M11 17 L21 1 H1 Z" fill="#555"/></svg>
    </div>
  </div>

  <!-- Sheet tabs -->
  <div class="tabs">
    <div class="arrows">
      <svg width="16" height="24" viewBox="0 0 16 24"><path d="M14 2 L3 12 L14 22" fill="none" stroke="#777" stroke-width="3"/></svg>
      <svg width="16" height="24" viewBox="0 0 16 24"><path d="M2 2 L13 12 L2 22" fill="none" stroke="#777" stroke-width="3"/></svg>
    </div>
    <div class="tab t-dash"><span>Dashboard</span></div>
    <div class="tab t-com">Commerciaux</div>
    <div class="tab t-cli">Clients</div>
    <div class="tab t-reg">Régions</div>
    <div class="tab t-par">Paramètres</div>
    <div class="tab t-bd">BD</div>
    <div class="tab t-pla">Plateformes Sociaux</div>
    <div class="tab t-pro">Protection et Utilisation</div>
    <svg class="plus" width="28" height="28" viewBox="0 0 28 28"><path d="M14 1 V27 M1 14 H27" stroke="#222" stroke-width="2.500"/></svg>
    <div class="hscroll">
      <svg width="6" height="26" viewBox="0 0 6 26"><path d="M0 1 H6 V6 H0 Z M0 10 H6 V15 H0 Z M0 19 H6 V24 H0 Z" fill="#333"/></svg>
      <svg class="hs" width="88" height="24" viewBox="0 0 88 24"><path d="M17 1 V23 L2 12 Z M71 1 V23 L86 12 Z" fill="#444"/><rect x="29" y="1" width="28" height="22" rx="10" fill="#555"/></svg>
    </div>
  </div>

  <!-- Status bar -->
  <div class="status">
    <span class="ready">Prêt &nbsp; Statistiques du classeur</span>
    <svg class="s-macro" width="34" height="30" viewBox="0 0 34 30"><path d="M2 2 H32 V28 H2 Z M2 8 H32" fill="none" stroke="#222" stroke-width="3"/></svg>
    <svg class="s-acc" width="30" height="30" viewBox="0 0 30 30"><circle cx="15" cy="6" r="4.500" fill="none" stroke="#222" stroke-width="2.500"/><path d="M2 8 Q6 6 10 11 H20 Q24 6 28 8" fill="none" stroke="#222" stroke-width="2.500"/></svg>
    <span class="acc">Accessibilité : vérification nécessaire</span>
    <div class="views">
      <div class="view on"><svg width="32" height="30" viewBox="0 0 32 30"><path d="M2 2 H30 V28 H2 Z M2 11 H30 M11 2 V28 M21 2 V28" fill="none" stroke="#111" stroke-width="3.500"/></svg></div>
      <div class="view"><svg width="34" height="30" viewBox="0 0 34 30"><path d="M2 2 H32 V28 H2 Z M8 28 V8 H26 V28 M13 13 H21" fill="none" stroke="#222" stroke-width="2.800"/></svg></div>
      <div class="view"><svg width="34" height="30" viewBox="0 0 34 30"><path d="M2 2 H32 V28 M2 28 V2 M12 2 V18 M22 2 V18" fill="none" stroke="#222" stroke-width="2.800"/></svg></div>
    </div>
    <i class="knob"></i>
    <span class="zoom-in">+</span>
    <span>90 %</span>
  </div>

  <!-- Watermark -->
  <svg class="watermark" width="410" height="200" viewBox="1410 1380 410 200">
    <text x="1418" y="1476" font-size="128" class="wm-ar" direction="ltr" textLength="386" lengthAdjust="spacingAndGlyphs">مستقل</text>
    <text x="1420" y="1552" font-size="58" class="wm-en" textLength="382" lengthAdjust="spacingAndGlyphs">mostaql.com</text>
  </svg>

</body>
</html>
```
FILE: styles.css
```css
* {
  box-sizing: border-box;
}

body {
  margin: 0;
  width: 3224px;
  height: 1600px;
  overflow: hidden;
  position: relative;
  background: #ececec;
  border-top: 4px solid #19ab4f;
  font-family: "Open Sans", "Noto Sans", sans-serif;
  font-size: 27px;
  color: #222;
  -webkit-text-stroke: 0.5px;
}

svg {
  display: block;
  flex: none;
  overflow: visible;
}

svg text {
  -webkit-text-stroke: 0;
}

.defs {
  position: absolute;
}

.chev {
  width: 16px;
  height: 10px;
}

.bigchev {
  width: 26px;
  height: 16px;
}

.launch {
  width: 20px;
  height: 20px;
}

hr {
  width: 2px;
  height: 56px;
  margin: 0;
  border: 0;
  background: #c4c4c4;
}

/* Menu */
.menu {
  height: 69px;
  padding-left: 28px;
  display: grid;
  grid-template-columns: 130px 149px 167px 136px 239px 178px 170px 162px 177px 224px 1228px 208px;
  align-items: center;
  font-size: 30px;
  background: linear-gradient(#f0f0f0, #ebebeb);
  white-space: nowrap;
}

.menu .active {
  font-weight: 700;
  letter-spacing: -2px;
  justify-self: start;
  line-height: 48px;
  border-bottom: 5px solid #0f7a38;
  margin-top: 4px;
  -webkit-text-stroke: 0;
}

.share {
  width: 208px;
  height: 57px;
  margin-top: -2px;
  padding: 0 11px;
  display: flex;
  align-items: center;
  gap: 10px;
  border: 0;
  border-radius: 8px;
  background: linear-gradient(#118a3c, #0a7028);
  color: #fff;
  font: 29.500px "Open Sans", sans-serif;
}

/* Ribbon */
.ribbon {
  width: 3186px;
  height: 236px;
  margin-left: 19px;
  display: flex;
  position: relative;
  background: #fff;
  border-radius: 20px;
  box-shadow: 0 4px 12px rgba(0, 0, 0, 0.35);
  white-space: nowrap;
}

.group {
  height: 227px;
  display: flex;
  flex-direction: column;
  position: relative;
}

.group::after {
  content: "";
  position: absolute;
  right: 0;
  top: 12px;
  width: 2px;
  height: 210px;
  background: #c8c8c8;
}

.tools {
  height: 197px;
  display: flex;
}

.rows {
  flex-direction: column;
}

.label {
  height: 30px;
  display: flex;
  align-items: center;
  font-size: 24px;
  font-weight: 600;
  line-height: 30px;
  -webkit-text-stroke: 0;
}

.label span {
  flex: 1;
  text-align: center;
}

.label .launch {
  margin: 0 8px 0 6px;
}

.g-clip .launch {
  margin-left: 0;
}

.g-clip { width: 245px; }
.g-font { width: 557px; }
.g-align { width: 538px; }
.g-num { width: 253px; }
.g-styles { width: 507px; }
.g-cells { width: 283px; }
.g-edit { width: 435px; }
.g-addins { width: 227px; }

.paste {
  width: 92px;
  margin: 20px 0 0 31px;
  display: flex;
  flex-direction: column;
  align-items: center;
}

.paste svg:first-child {
  margin-left: 12px;
}

.paste span {
  margin: 8px 0 14px;
  line-height: 36px;
}

.clip-side {
  margin: 18px 0 0 18px;
}

.clip-side > svg:first-child {
  margin-left: 6px;
}

.copy {
  margin: 21px 0;
  display: flex;
  align-items: center;
  gap: 16px;
}

.combo {
  height: 56px;
  padding: 0 5px;
  display: flex;
  align-items: center;
  justify-content: space-between;
  border: 2px solid #767676;
  border-radius: 8px;
  background: #fff;
  color: #111;
  font-size: 26.500px;
}

.font-row1 {
  padding: 28px 0 0 20px;
  display: grid;
  grid-template-columns: 288px 98px 38px 36px;
  column-gap: 8px;
  align-items: center;
}

.font-row1 > svg {
  margin-left: 8px;
}

.font-row1 > svg:last-child {
  margin-left: 28px;
}

.font-row2 {
  padding: 18px 0 0 36px;
  display: grid;
  grid-template-columns: 66px 59px 44px 35px 15px 54px 34px 15px 55px 42px 55px 16px;
  align-items: center;
  font-size: 30px;
}

.font-row2 i {
  font-family: "Liberation Serif", serif;
  font-size: 34px;
}

.align-left {
  width: 410px;
}

.align-row1 {
  height: 56px;
  margin: 28px 0 0 31px;
  display: grid;
  grid-template-columns: 61px 50px 71px 49px 54px 50px 16px;
  align-items: center;
}

.align-row2 {
  margin: 30px 0 0 31px;
  display: grid;
  grid-template-columns: 61px 62px 61px 61px 34px;
}

.pressed {
  width: 56px;
  height: 56px;
  padding: 7px 9px;
  border: 2px solid #666;
  border-radius: 9px;
  background: #e3e3e3;
}

.g-align hr {
  height: 146px;
  margin-top: 27px;
}

.wrap-merge {
  padding: 35px 0 0 22px;
}

.wrap-merge > svg {
  margin-left: 5px;
}

.merge {
  margin-top: 34px;
  display: flex;
  align-items: center;
  gap: 16px;
}

.g-num .combo {
  width: 213px;
  margin: 10px 0 0 20px;
  flex: none;
}

.num-row2 {
  margin: 16px 0 0 29px;
  display: grid;
  grid-template-columns: 54px 44px 60px 40px;
  align-items: center;
}

.zeros {
  font-size: 25px;
  letter-spacing: -2.500px;
  color: #444;
}

.num-row3 {
  margin: 21px 0 0 29px;
  display: grid;
  grid-template-columns: 61px 61px;
}

.dec {
  font-size: 23px;
  letter-spacing: -1.500px;
  fill: #333;
}

.list {
  padding: 9px 0 0 29px;
  display: flex;
  flex-direction: column;
}

.item {
  height: 61px;
  display: flex;
  align-items: center;
  letter-spacing: -.1px;
}

.g-styles .item {
  letter-spacing: -.2px;
}

.item > svg:first-child {
  margin-right: 9px;
}

.item .chev:last-child {
  margin-left: 5px;
}

.w-tab { letter-spacing: -.4px; }
.w-ins { width: 105px; }
.w-sup { width: 152px; }

.edit-small {
  width: 106px;
}

.edit-small .chev:last-child {
  margin-left: 1px;
}

.edit-small .chev.wide {
  margin-left: 5px;
}

.big {
  width: 96px;
  padding-top: 20px;
  display: flex;
  flex-direction: column;
  align-items: center;
  font-size: 26.500px;
  line-height: 38px;
  text-align: center;
}

.big > span {
  margin-top: 7px;
}

.big .chev {
  display: inline-block;
  vertical-align: middle;
}

.g-edit .big {
  margin-left: 17px;
}

.g-edit .big.big2 {
  width: 180px;
  margin-left: 13px;
}

.g-addins .big {
  width: 227px;
}

.collapse {
  margin: 197px 0 0 94px;
}

/* Formula bar */
.formula {
  height: 60px;
  margin: 20px 19px 0;
  display: flex;
  align-items: center;
}

.box {
  height: 60px;
  display: flex;
  align-items: center;
  border: 2px solid #c8c8c8;
  border-radius: 10px;
  background: #fff;
}

.namebox {
  width: 370px;
  margin-right: 21px;
  padding: 0 12px 0 15px;
  justify-content: space-between;
  font-size: 28px;
}

.fx {
  width: 173px;
  margin: 0 11px 0 22px;
  padding-left: 12px;
}

.fx svg + svg {
  margin-left: 22px;
}

.fx em {
  margin: -6px 0 0 20px;
  font: italic 44px "Liberation Serif", serif;
  -webkit-text-stroke: 1px;
}

.input {
  flex: 1;
  padding: 0 7px 8px;
  justify-content: flex-end;
}

/* Worksheet */
.work {
  height: 1094px;
  margin-top: 19px;
  display: flex;
}

.sheet {
  width: 3168px;
  margin-left: 2px;
  display: flex;
  overflow: hidden;
  background:
    radial-gradient(ellipse 900px 200px at 2500px 1150px, rgba(30, 80, 140, .7), rgba(30, 80, 140, 0) 90%),
    radial-gradient(ellipse 300px 560px at 3190px 1130px, #142a68, rgba(36, 100, 160, .8) 60%, rgba(50, 150, 200, 0)),
    radial-gradient(ellipse 330px 240px at 1500px 0, #2b72a8 20%, rgba(43, 114, 168, 0)),
    radial-gradient(ellipse 650px 200px at 2330px 0, #348fba 40%, rgba(52, 143, 186, 0)),
    radial-gradient(ellipse 1250px 260px at 300px 0, #22ffff 50%, rgba(34, 255, 255, 0)),
    radial-gradient(ellipse 170px 480px at 0 760px, #0b2b48, rgba(12, 40, 70, 0)),
    linear-gradient(90deg, #22a0ac 0, #2f8ca8 14%, #62e0ee 22%, #5ee0f0 32%, #55c4d8 42%, #60e4ee 61%, #3bd4e6 66%, #40dcee 100%);
}

.card {
  background: #fff;
  border-radius: 32px;
  position: relative;
}

.card text,
.total text,
.banner text {
  font-family: Lato, sans-serif;
  font-weight: 700;
}

.sidebar {
  width: 377px;
  height: 1034px;
  margin: 26px 0 0 36px;
  background: #fff;
  border-radius: 28px;
  box-shadow: 0 34px 36px 4px rgba(3, 22, 34, .8);
}

.logo {
  padding: 34px 0 0;
  margin-left: -4px;
  display: flex;
  flex-direction: column;
  align-items: center;
  height: 189px;
}

.logo strong {
  margin-top: 2px;
  font: 800 13.500px/20px Inter, sans-serif;
  color: #4a14d8;
  text-align: center;
}

.nav {
  height: 80px;
  margin-top: 31px;
  padding-left: 75px;
  display: flex;
  align-items: center;
  font-size: 30.500px;
  color: #111;
}

.nav span {
  margin-left: 24px;
}

.nav.sales span {
  margin-left: 11px;
}

.nav.active {
  width: 342px;
  margin-top: 38px;
  padding-left: 68px;
  border-radius: 0 12px 12px 0;
  background: linear-gradient(90deg, #a284f8, #5a2ae2 75%, #5022e0);
  color: #fff;
  font-size: 30px;
  font-weight: 600;
  -webkit-text-stroke: 0;
}

.nav.active span {
  margin-left: 12px;
}

.shopify {
  margin: 106px 0 0 20px;
}

.col-sales {
  width: 965px;
  margin: 26px 0 0 22px;
}

.monthly {
  width: 932px;
  height: 687px;
  margin-left: 16px;
  padding: 21px 0 0 17px;
  box-shadow: 0 4px 16px rgba(0, 30, 50, .5);
}

.plot {
  background:
    radial-gradient(ellipse 620px 520px at 30% 35%, #421f52, rgba(48, 20, 70, .7) 55%, rgba(20, 5, 50, 0)),
    linear-gradient(100deg, #2a1436, #170538 65%, #0a0220);
  box-shadow: 6px 6px 10px rgba(0, 0, 0, .45);
}

.val {
  font-size: 22px;
  fill: #fff;
}

.big-val {
  font-size: 24px;
}

.card .val text {
  font-weight: 800;
}

.name {
  font-size: 23px;
  fill: #fff;
  stroke: #fff;
  stroke-width: .5px;
}

.title {
  font-size: 44px;
  fill: #fff;
  stroke: #fff;
  stroke-width: .8px;
}

.total text {
  font-weight: 800;
}

.soft {
  fill: #e8e6ea;
  stroke: #e8e6ea;
}

.title.grey {
  fill: #dcdcdc;
  stroke: #dcdcdc;
}

.tip {
  position: absolute;
  left: 671px;
  top: 227px;
  width: 231px;
  height: 48px;
  line-height: 43px;
  text-align: center;
  background: #eeebf2;
  border: 2px solid #77727f;
  color: #6a6a76;
  font-size: 26.500px;
  box-shadow: 4px 5px 8px rgba(0, 0, 0, .5);
}

.slicer {
  margin: 13px 0 0 16px;
  width: 857px;
  height: 48px;
  display: grid;
  grid-template-columns: repeat(12, 1fr);
  gap: 5px;
}

.slicer span {
  padding-left: 16px;
  background: #ff007d;
  border-radius: 9px;
  color: #fff;
  font: 700 27px/48px Lato, sans-serif;
}

.commercial {
  height: 352px;
  border-radius: 38px;
  overflow: hidden;
  background: linear-gradient(198deg, #ff0052 10px, #d80048 70px, #c00040 110px, #60001f 165px, #000 220px);
}

.col-total {
  width: 618px;
  padding-top: 33px;
}

.total {
  width: 611px;
  height: 415px;
  margin-left: 12px;
  position: relative;
  border-radius: 38px;
  background: linear-gradient(146deg, #ff0048, #ff007a 110px, #ff1090 122px, #c06ae8 134px, #50a8ff 146px, #3c8ee0 152px, #000 164px);
}

/* black tab sticking out on the right */
.total::after {
  content: "";
  position: absolute;
  left: 600px;
  top: 38px;
  width: 23px;
  height: 98px;
  background: #000;
}

.country {
  height: 618px;
  margin-top: 15px;
  background: linear-gradient(#d2d2d2 0, #cfcfcf 32px, #f6f6f6 56px, #fff 70px);
  box-shadow: 0 6px 14px rgba(0, 25, 45, .65);
}

.ring {
  filter: drop-shadow(4px 4px 3px rgba(0, 0, 0, .55));
}

.pct {
  font-size: 26px;
  fill: #fff;
}

.key {
  font-size: 26px;
  fill: #444;
  font-weight: 700;
}

.key text {
  stroke: #444;
  stroke-width: .5px;
}

.key.dark {
  font-size: 27px;
  fill: #111;
}

.banner {
  position: absolute;
  background: linear-gradient(170deg, #ff0050 10%, #f00038 55%, #b80014);
}

.country-title {
  left: 116px;
  top: -5px;
  background: linear-gradient(#e83a86, #f41a70 60%, #ff005c);
}

.col-clients {
  width: 1053px;
  margin: 71px 0 0 17px;
}

.category {
  height: 566px;
  display: flex;
  position: relative;
  background: #fff;
  border-radius: 32px 0 32px 32px;
  box-shadow: 0 5px 12px rgba(0, 30, 50, .5);
}

.category-main {
  width: 753px;
  height: 572px;
  box-shadow: 0 6px 7px -3px rgba(0, 40, 60, .5), 1px 0 3px rgba(0, 0, 0, .1);
}

.counts {
  width: 342px;
  margin: 113px 0 0 -42px;
  position: relative;
  display: flex;
  flex-direction: column;
  gap: 31px;
}

.count {
  display: flex;
  align-items: center;
  height: 113px;
  font-family: Lato, sans-serif;
  font-weight: 700;
  color: #fff;
}

.count.last {
  margin-top: 7px;
}

.count b {
  width: 138px;
  height: 113px;
  background: #000;
  border-radius: 13px;
  font-size: 37px;
  line-height: 113px;
  text-align: center;
}

.count span {
  width: 204px;
  height: 57px;
  margin-top: -8px;
  background: linear-gradient(163deg, #ff0050, #ff0878 19px, #2f78d8 21px, #2f78d8 23px, #000 25px);
  text-align: center;
  line-height: 57px;
  font-size: 27px;
}

.count em {
  font-style: normal;
}

.count small {
  font-size: 19px;
}

.category-title {
  left: 26px;
  top: -50px;
}

.year {
  position: absolute;
  left: 833px;
  top: -61px;
  width: 238px;
  height: 113px;
  padding: 16px;
  background: #fff;
}

.year span {
  display: block;
  width: 204px;
  height: 71px;
  padding-left: 17px;
  border-radius: 9px;
  background: #ff0040;
  color: #fff;
  font: 26px/71px Lato, sans-serif;
}

.leaders {
  height: 429px;
  margin-top: 24px;
  padding: 88px 0 0 52px;
  box-shadow: 0 5px 14px rgba(0, 25, 50, .65);
}

.leaders-title {
  left: -33px;
  top: 14px;
}

.leader {
  height: 80px;
  margin-bottom: 33px;
  display: flex;
  align-items: center;
  font-family: Lato, sans-serif;
  font-weight: 700;
}

.track {
  width: 588px;
  margin-top: 10px;
}

.leader + .leader .track {
  margin-top: 0;
}

.amount {
  box-sizing: content-box;
  height: 50px;
  border: solid #0f0;
  border-width: 15px 14px 15px 10px;
  border-radius: 0 8px 8px 0;
  background: linear-gradient(100deg, #00ff00 5%, #06c808 30%, #057808 55%, #04300a 78%, #000 92%) padding-box;
  color: #fff;
  font-size: 22px;
  letter-spacing: -.9px;
  line-height: 50px;
  text-align: center;
}

.rank {
  width: 61px;
  height: 80px;
  border: 2px solid #b0b0b0;
  font-size: 36px;
  font-weight: 800;
  line-height: 74px;
  text-align: center;
  color: #000;
}

.who {
  width: 352px;
  height: 76px;
  padding-left: 16px;
  color: #fff;
  font-size: 32px;
  letter-spacing: .2px;
  line-height: 76px;
  white-space: nowrap;
}

.who.gold { background: linear-gradient(165deg, #806000, #b89a00 40%, #f0e800 85%, #ffff00); }
.who.orange { background: linear-gradient(165deg, #b83a00 25%, #d86a00 50%, #f0b800 75%, #ffff00); }
.who.grey { background: linear-gradient(165deg, #666, #545454 50%, #707070); color: #f4f4f4; }

.vscroll {
  width: 54px;
  padding: 10px 0 3px 3px;
  display: flex;
  flex-direction: column;
  align-items: center;
  background: #f0f0f0;
}

.thumb {
  width: 22px;
  height: 782px;
  margin: 10px 0 256px;
  border-radius: 11px;
  background: #555;
}

/* Sheet tabs */
.tabs {
  height: 78px;
  display: flex;
  align-items: flex-start;
  background: #ececec;
  border-bottom: 2px solid #c4c4c4;
  font-size: 31px;
  white-space: nowrap;
}

.arrows {
  width: 276px;
  padding: 26px 0 0 67px;
  display: flex;
  gap: 61px;
}

.tab {
  height: 56px;
  margin: 11px 21px 0 0;
  position: relative;
  border-radius: 9px;
  line-height: 56px;
  text-align: center;
}

.tab::after {
  content: "";
  position: absolute;
  right: -12px;
  top: 6px;
  width: 2px;
  height: 42px;
  background: #cfcfcf;
}

.t-dash {
  width: 199px;
  height: 66px;
  margin-top: 0;
  font-weight: 600;
  font-size: 31px;
  letter-spacing: -.6px;
  border-radius: 0 0 10px 10px;
  background: linear-gradient(#fff, #98efff);
  box-shadow: 0 0 5px #fff;
  -webkit-text-stroke: 0;
}

.t-dash span {
  display: block;
  margin: 6px 18px 0 16px;
  height: 54px;
  line-height: 51px;
  border-bottom: 5px solid #0a7028;
}

.t-com { width: 243px; background: #50ff8c; }
.t-cli { width: 139px; background: #ff0060; color: #fff; }
.t-reg { width: 159px; background: #d99600; }
.t-par { width: 208px; background: #7d7d7d; color: #fff; }
.t-bd { width: 80px; background: #0000ff; color: #fff; }
.t-pla { width: 341px; background: #ffff00; }
.t-pro { width: 395px; background: #b80000; color: #fff; }

.plus {
  margin: 24px 0 0 88px;
}

.hscroll {
  margin: 27px 55px 0 auto;
  display: flex;
  gap: 45px;
}

/* Status bar */
.status {
  height: 40px;
  padding-left: 27px;
  display: flex;
  align-items: flex-start;
  background: #f3f3f3;
  font-size: 24px;
  line-height: 26px;
  white-space: nowrap;
}

.status > span {
  margin-top: 13px;
}

.ready { width: 417px; }
.s-macro { margin-top: 9px; }
.s-acc { margin: 7px 13px 0 42px; }

.views {
  margin-left: auto;
  display: flex;
}

.view {
  width: 94px;
  height: 40px;
  padding: 8px 30px;
}

.view.on {
  background: #d0d0d0;
}

.knob {
  width: 12px;
  height: 30px;
  margin: 13px 148px 0 133px;
  background: #333;
}

.zoom-in {
  margin-right: 38px;
}

.status > span:last-child {
  width: 74px;
}

/* Watermark */
.watermark {
  position: absolute;
  left: 1410px;
  top: 1376px;
  opacity: .36;
}

.wm-ar {
  font-family: "DejaVu Sans", sans-serif;
  font-weight: 700;
  fill: #aaa;
}

.wm-en {
  font-weight: 700;
  fill: #aaa;
}
```
